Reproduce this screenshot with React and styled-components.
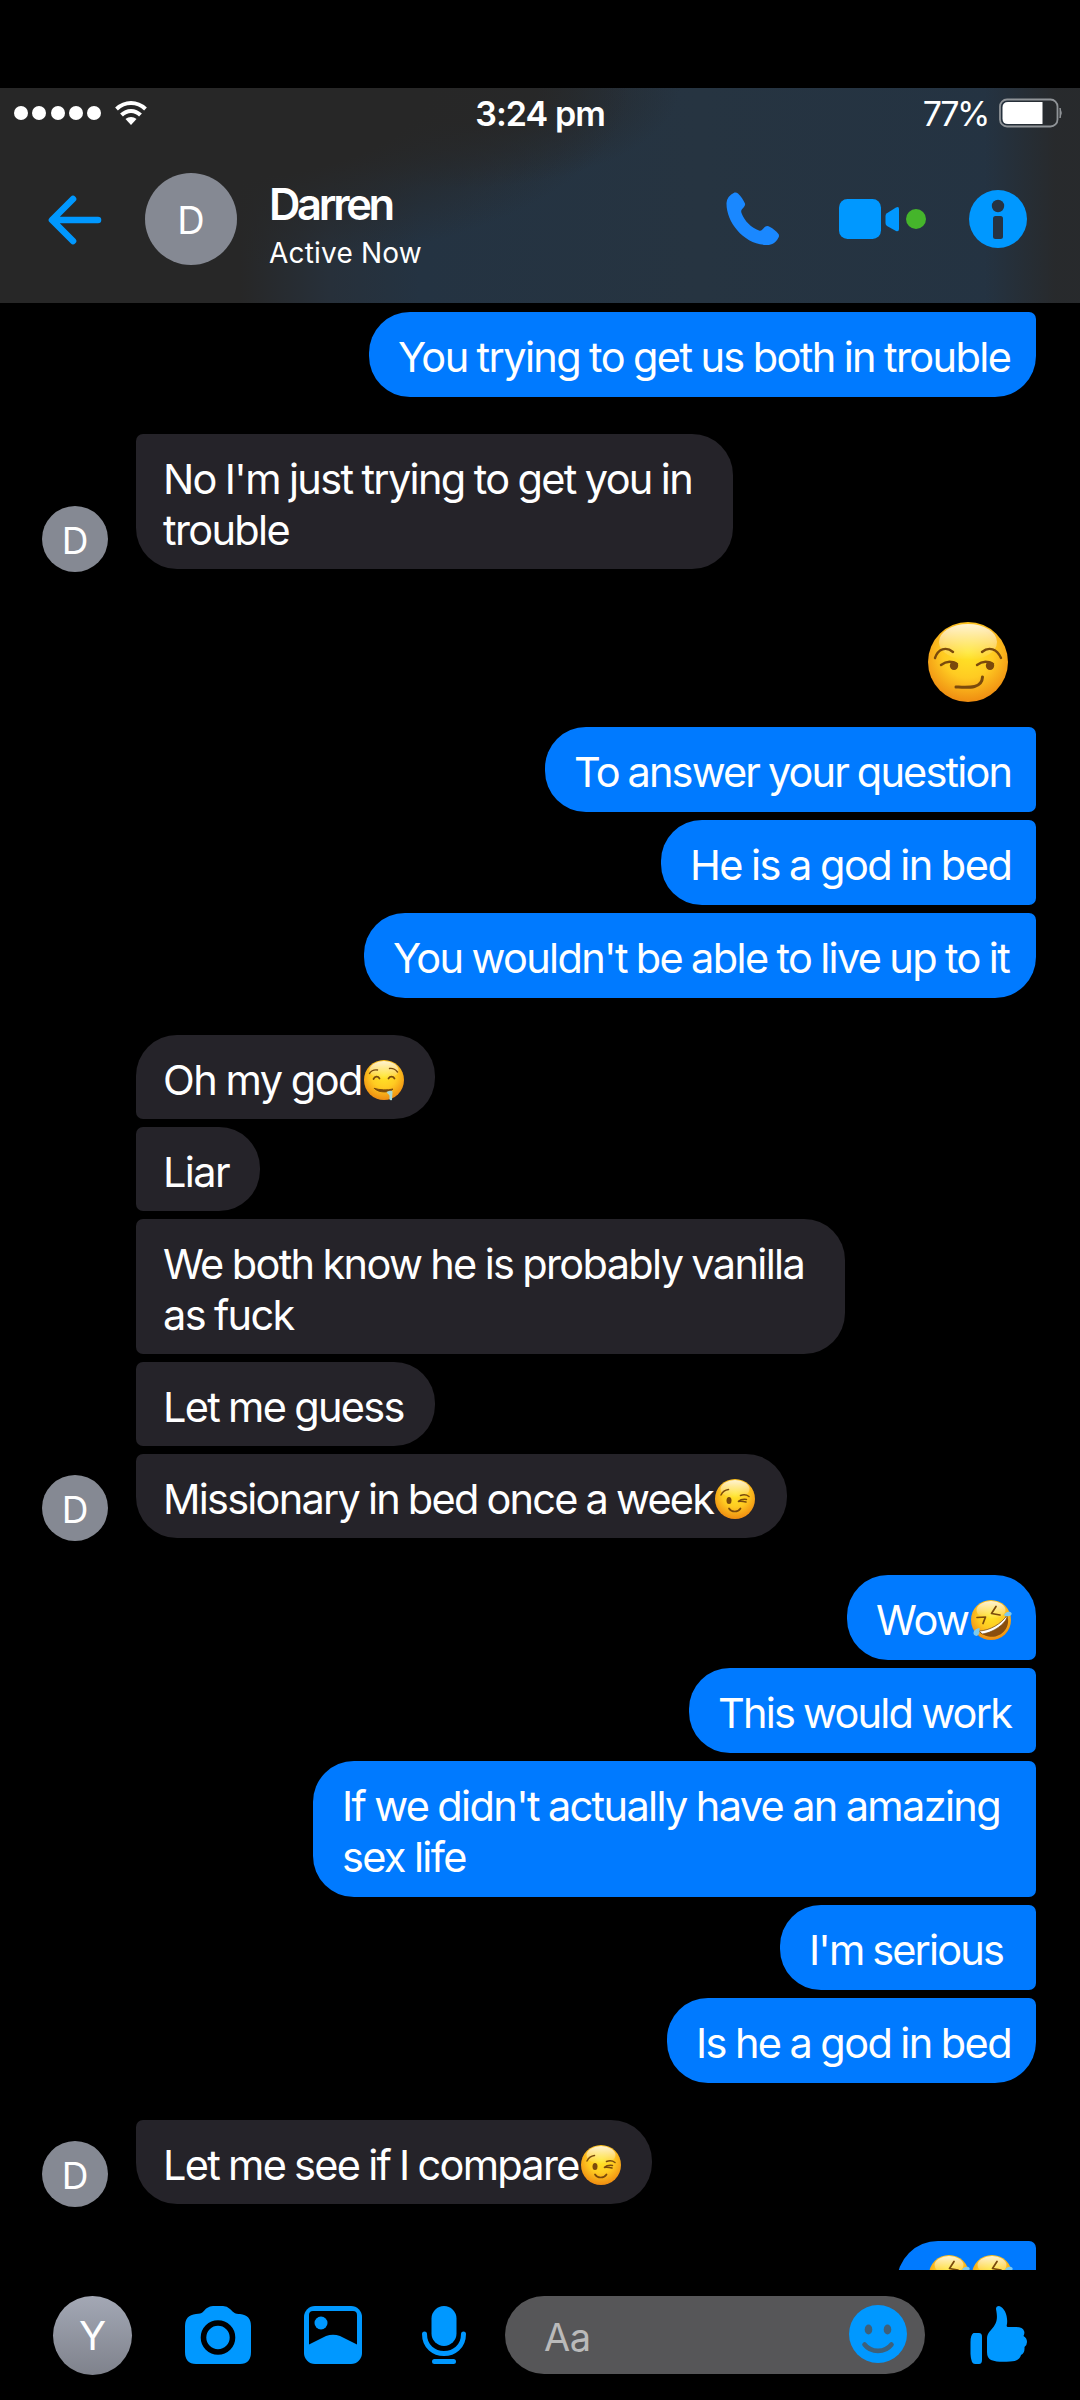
import React from "react";
import styled, { createGlobalStyle, css } from "styled-components";

const Global = createGlobalStyle`
  html, body { margin: 0; background: #000; }
  * { box-sizing: border-box; }
`;

const BLUE = "#0098ff";

const Screen = styled.div`
  width: 1080px;
  height: 2400px;
  padding-top: 88px;
  display: flex;
  flex-direction: column;
  overflow: hidden;
  background: #000;
  color: #fff;
  font-family: Inter, Roboto, "Liberation Sans", sans-serif;
`;

const Header = styled.header`
  flex: none;
  height: 215px;
  background:
    linear-gradient(90deg, rgba(39, 39, 39, 0) 985px, rgba(40, 41, 42, 0.9) 1055px),
    radial-gradient(ellipse 410px 180px at 220px 0, #272727 50%, rgba(39, 39, 39, 0) 100%),
    radial-gradient(ellipse 220px 100px at 460px 0, #272829 35%, rgba(39, 40, 41, 0) 100%),
    linear-gradient(90deg, #272727 240px, #27303a 330px, #243342 420px, #263441 700px, #243342 1000px);
`;

const StatusBar = styled.div`
  display: flex;
  align-items: center;
  height: 50px;
  padding: 0 17px 0 14px;
`;

const Signal = styled.div`
  display: flex;
  gap: 4.3px;
`;

const SignalDot = styled.span`
  width: 14px;
  height: 14px;
  border-radius: 50%;
  background: #fff;
`;

const Wifi = styled.svg`
  width: 32px;
  height: 24px;
  margin-left: 14px;
`;

const Clock = styled.time`
  width: 150px;
  margin: 1px 0 0 328px;
  font-size: 34px;
  font-weight: 580;
  letter-spacing: -0.9px;
  white-space: nowrap;
`;

const Percent = styled.span`
  margin: 1px 11px 0 auto;
  font-size: 34px;
  letter-spacing: -2.4px;
`;

const Battery = styled.svg`
  width: 64px;
  height: 30px;
`;

const TitleBar = styled.div`
  display: flex;
  align-items: center;
  height: 162px;
  padding: 0 53px 0 47px;
`;

const BackIcon = styled.svg`
  width: 56px;
  height: 52px;
`;

const Avatar = styled.div`
  flex: none;
  display: flex;
  align-items: center;
  justify-content: center;
  width: ${(p) => p.$size}px;
  height: ${(p) => p.$size}px;
  padding-top: 2px;
  border-radius: 50%;
  background: #858993;
  font-size: 38px;
  line-height: 1;
`;

const HeaderAvatar = styled(Avatar)`
  margin-left: 42px;
`;

const Person = styled.div`
  margin: 0 auto 0 32px;
  padding-top: 10px;
`;

const Name = styled.div`
  font-size: 43.5px;
  font-weight: 560;
  line-height: 52px;
  letter-spacing: -3.3px;
`;

const Presence = styled.div`
  font-size: 28px;
  line-height: 34px;
  letter-spacing: 0.2px;
  margin-top: 6px;
`;

const PhoneIcon = styled.svg`
  width: 54px;
  height: 54px;
`;

const VideoIcon = styled.svg`
  width: 60px;
  height: 40px;
  margin-left: 59px;
`;

const OnlineDot = styled.span`
  width: 20px;
  height: 20px;
  margin-left: 7px;
  border-radius: 50%;
  background: #45b52b;
`;

const InfoIcon = styled.svg`
  width: 58px;
  height: 58px;
  margin-left: 43px;
`;

const Thread = styled.main`
  flex: none;
  height: 1967px;
  padding: 9px 44px 0 42px;
  display: flex;
  flex-direction: column;
  gap: 37px;
  overflow: hidden;
`;

const Group = styled.section`
  flex: none;
  display: flex;
  align-items: flex-end;
  justify-content: ${(p) => (p.$mine ? "flex-end" : "flex-start")};
  padding-top: ${(p) => (p.$lift ? 16 : 0)}px;
`;

const Stack = styled.div`
  display: flex;
  flex-direction: column;
  gap: 8px;
  align-items: ${(p) => (p.$mine ? "flex-end" : "flex-start")};
`;

const SenderAvatar = styled(Avatar)`
  margin: 0 28px -3px 0;
  font-size: 37px;
`;

const radius = ({ $mine, $first, $last }) => {
  const head = $first ? 41 : 7;
  const tail = $last ? 41 : 7;
  return $mine
    ? css`border-radius: 41px ${head}px ${tail}px 41px;`
    : css`border-radius: ${head}px 41px 41px ${tail}px;`;
};

const Bubble = styled.div`
  width: ${(p) => p.$width}px;
  padding: ${(p) => (p.$mine ? "20px 0 14px 29px" : "20px 0 13px 27px")};
  ${radius}
  background: ${(p) => (p.$mine ? "#007aff" : "#252329")};
  font-size: 41.5px;
  line-height: 51px;
  letter-spacing: ${(p) => p.$track}px;
  word-spacing: -1px;
  white-space: pre;
`;

const EmojiBubble = styled(Bubble)`
  display: flex;
  gap: 1px;
  height: 85px;
  padding: 14px 0 0 30px;
`;

const BigEmoji = styled.div`
  height: 97px;
  padding: 0 28px 0 0;
  svg { display: block; width: 80px; height: 80px; margin: 0; }
`;

const EmojiSvg = styled.svg`
  flex: none;
  width: 40px;
  height: 40px;
  margin: 0 0 0 2px;
  vertical-align: -5px;
  overflow: visible;
`;

const Composer = styled.footer`
  display: flex;
  align-items: center;
  height: 130px;
  padding: 0 52px 0 53px;
`;

const SelfAvatar = styled(Avatar)`
  margin-right: 53px;
  background: linear-gradient(#a3a8b5, #7f828c);
  font-size: 40px;
`;

const ToolIcon = styled.svg`
  flex: none;
  width: ${(p) => p.$w}px;
  height: 58px;
  margin-right: ${(p) => p.$gap || 0}px;
`;

const Field = styled.div`
  display: flex;
  align-items: center;
  justify-content: space-between;
  width: 420px;
  height: 78px;
  margin-right: 45px;
  padding: 0 18px 2px 39px;
  border-radius: 39px;
  background: #565658;
`;

const Placeholder = styled.span`
  padding-top: 6px;
  font-size: 38px;
  color: #bababa;
  letter-spacing: -0.5px;
`;

const INK = "#7a4a0c";

const faces = {
  smirk: (
    <g fill="none" stroke={INK} strokeWidth="2.4" strokeLinecap="round">
      <path d="M7 36C10 27 18 24 25 30M54 30C61 24 69 27 73 36" />
      <path d="M13 43C18 39 24 39 29 42M49 43C54 39 60 39 65 42" />
      <circle cx="26" cy="43.800" r="4.200" fill={INK} stroke="none" />
      <circle cx="62" cy="43.800" r="4.200" fill={INK} stroke="none" />
      <path d="M28 65C40 65.500 54 67 54.500 55" strokeWidth="3" />
    </g>
  ),
  drool: (
    <g fill="none" stroke={INK} strokeWidth="2.800" strokeLinecap="round">
      <path d="M11 27C14 22 20 19 27 20M51 17C58 16 63 19 67 24" />
      <path d="M19 38C22 32 28 32 31 37M49 37C52 32 58 32 61 37" strokeWidth="3.400" />
      <path d="M21 57C31 60 48 61 58 58C54 65 30 67 21 57Z" fill={INK} strokeWidth="2" />
      <path d="M45 64C50 62 57 60 57 64L56 80C52 82 50 79 51 75C52 68 48 69 45 64Z" fill="#a9d8d2" stroke="none" />
    </g>
  ),
  wink: (
    <g fill="none" stroke={INK} strokeWidth="3" strokeLinecap="round">
      <path d="M12 32C15 26 20 22 27 21M51 33C57 31 64 32 68 35" />
      <ellipse cx="28" cy="43" rx="5" ry="7" fill={INK} stroke="none" />
      <path d="M63 41C56 40 50 42 46 45C52 44 58 45 62 46" />
      <path d="M28 59C33 67 46 67 51 59" strokeWidth="3.400" />
    </g>
  ),
  rofl: (
    <g fill="none" stroke={INK} strokeWidth="3.400" strokeLinecap="round" strokeLinejoin="round">
      <path d="M12 35L29 34L24 47M50 13L41 27L58 30" />
      <path d="M16 63C36 62 60 50 72 30C82 56 58 78 35 73C27 71 20 68 16 63Z" fill="#8a4e0d" stroke="none" />
      <path d="M17 62C38 61 60 48 72 31C74 42 50 64 23 68Z" fill="#fff" stroke={INK} strokeWidth="1.500" />
      <path d="M17 56C5 58 2 67 8 71C14 74 18 68 17 56Z M66 31C68 23 78 22 81 26C83 31 75 35 66 31Z" fill="#7cc9ee" stroke="none" />
    </g>
  ),
};

function Emoji({ kind }) {
  return (
    <EmojiSvg viewBox="0 0 80 80" aria-hidden="true">
      <defs>
        <radialGradient id={`glow-${kind}`} cx="50%" cy="38%" r="64%">
          <stop offset="0" stopColor="#ffe627" />
          <stop offset="0.500" stopColor="#ffcb22" />
          <stop offset="1" stopColor="#ee8810" />
        </radialGradient>
        <linearGradient id={`shine-${kind}`} x1="0" y1="0" x2="0" y2="1">
          <stop offset="0" stopColor="#fff" stopOpacity="0.800" />
          <stop offset="1" stopColor="#fff" stopOpacity="0" />
        </linearGradient>
      </defs>
      <circle cx="40" cy="40" r="40" fill={`url(#glow-${kind})`} />
      <ellipse cx="40" cy="20" rx="29" ry="18" fill={`url(#shine-${kind})`} />
      {faces[kind]}
    </EmojiSvg>
  );
}

const conversation = [
  { mine: true, continued: true, items: [{ text: "You trying to get us both in trouble", width: 667, track: -1.62 }] },
  { continued: true, items: [{ text: "No I'm just trying to get you in\ntrouble", width: 597, track: -1.65 }] },
  {
    mine: true,
    lift: true,
    items: [
      { big: "smirk" },
      { text: "To answer your question", width: 491, track: -1.86 },
      { text: "He is a god in bed", width: 375, track: -1.54 },
      { text: "You wouldn't be able to live up to it", width: 672, track: -1.66 },
    ],
  },
  {
    items: [
      { text: "Oh my god", emoji: "drool", width: 299, track: -1.5 },
      { text: "Liar", width: 124, track: -1.6 },
      { text: "We both know he is probably vanilla\nas fuck", width: 709, track: -1.66 },
      { text: "Let me guess", width: 299, track: -1.7 },
      { text: "Missionary in bed once a week", emoji: "wink", width: 651, track: -1.77 },
    ],
  },
  {
    mine: true,
    items: [
      { text: "Wow", emoji: "rofl", width: 189, track: -1.4 },
      { text: "This would work", width: 347, track: -1.78 },
      { text: "If we didn't actually have an amazing\nsex life", width: 723, track: -1.65 },
      { text: "I'm serious ", width: 256, track: -1.85 },
      { text: "Is he a god in bed", width: 369, track: -1.6 },
    ],
  },
  { continued: true, items: [{ text: "Let me see if I compare", emoji: "wink", width: 516, track: -1.72 }] },
  { mine: true, continued: true, items: [{ emojis: ["rofl", "rofl"], width: 139 }] },
];

function Message({ item, mine, first, last }) {
  if (item.big) return <BigEmoji><Emoji kind={item.big} /></BigEmoji>;
  const shape = { $mine: mine, $first: first, $last: last, $width: item.width };
  if (item.emojis) {
    return (
      <EmojiBubble {...shape}>
        {item.emojis.map((kind, i) => <Emoji key={i} kind={kind} />)}
      </EmojiBubble>
    );
  }
  return (
    <Bubble {...shape} $track={item.track}>
      {item.text}
      {item.emoji && <Emoji kind={item.emoji} />}
    </Bubble>
  );
}

export default function App() {
  return (
    <Screen>
      <Global />
      <Header>
        <StatusBar>
          <Signal>{[0, 1, 2, 3, 4].map((n) => <SignalDot key={n} />)}</Signal>
          <Wifi viewBox="0 0 32 24" fill="none" stroke="#fff" strokeWidth="4">
            <path d="M1.500 8C10 0 22 0 30.500 8M6.500 14C12 8.500 20 8.500 25.500 14" />
            <path d="M10.500 18C13.500 15.200 18.500 15.200 21.500 18L16 24Z" fill="#fff" stroke="none" />
          </Wifi>
          <Clock>3:24 pm</Clock>
          <Percent>77%</Percent>
          <Battery viewBox="0 0 64 30">
            <rect x="1" y="1.500" width="57.500" height="27" rx="7" fill="none" stroke="#909498" strokeWidth="1.800" />
            <path d="M9 4H43.500V26H9Q3.500 26 3.500 20.500V9.500Q3.500 4 9 4Z" fill="#fff" />
            <path d="M61 10Q63.500 15 61 20Z" fill="#909498" stroke="#909498" />
          </Battery>
        </StatusBar>
        <TitleBar>
          <BackIcon viewBox="0 0 56 52" fill="none" stroke={BLUE} strokeWidth="6.600" strokeLinecap="round" strokeLinejoin="round">
            <path d="M26 6L5 27L26 48M6 27H51" />
          </BackIcon>
          <HeaderAvatar $size={92}>D</HeaderAvatar>
          <Person>
            <Name>Darren</Name>
            <Presence>Active Now</Presence>
          </Person>
          <PhoneIcon viewBox="0 0 54 54" fill="#1a88ff">
            <path d="M8.500 0.500Q10.500 0 12 1.500C15 4.500 17.500 8 19 11.500Q19.500 13 18 15C16 17.500 14.500 18 15.500 21C18.500 29 25.500 36 33 38.500C36 39.500 37 36 39.500 34.500Q41.500 33.500 44 35C47 36.500 50 39 52.500 42Q53.500 43.500 52.500 45.500C49.500 51 46.500 53 41 53C18 53 0 30 0.500 11Q1 4 8.500 0.500Z" />
          </PhoneIcon>
          <VideoIcon viewBox="0 0 60 40" fill={BLUE}>
            <rect width="42" height="40" rx="8.500" />
            <path d="M47.500 14.500Q46.500 15.500 46.500 17V24Q46.500 26 48 27L57 32Q60 33 60 30V10Q60 7 57 8.500Z" />
          </VideoIcon>
          <OnlineDot />
          <InfoIcon viewBox="0 0 58 58">
            <circle cx="29" cy="29" r="29" fill={BLUE} />
            <circle cx="29" cy="16" r="6.200" fill="#263342" />
            <rect x="24" y="26" width="10" height="23" rx="2.500" fill="#263342" />
          </InfoIcon>
        </TitleBar>
      </Header>

      <Thread>
        {conversation.map((group, g) => (
          <Group key={g} $mine={group.mine} $lift={group.lift}>
            {!group.mine && <SenderAvatar $size={66}>D</SenderAvatar>}
            <Stack $mine={group.mine}>
              {group.items.map((item, i) => (
                <Message
                  key={i}
                  item={item}
                  mine={group.mine}
                  first={i === 0 && !group.continued}
                  last={i === group.items.length - 1}
                />
              ))}
            </Stack>
          </Group>
        ))}
      </Thread>

      <Composer>
        <SelfAvatar $size={79}>Y</SelfAvatar>
        <ToolIcon $w={66} $gap={53} viewBox="0 0 66 58">
          <path d="M11 8C18 8 18 5 22 2Q25 0 28 0H38Q42 0 45 3C49 7 50 8 55 8Q66 9 66 20V46Q66 58 55 58H11Q0 58 0 46V20Q0 9 11 8Z" fill={BLUE} />
          <circle cx="33" cy="31.500" r="14.500" fill={BLUE} stroke="#000" strokeWidth="5.600" />
        </ToolIcon>
        <ToolIcon $w={58} $gap={60} viewBox="0 0 58 58">
          <rect width="58" height="58" rx="11" fill={BLUE} />
          <path d="M9 5H49Q53 5 53 9V38.500L36 30Q29 27.500 22 30L5 38.500V9Q5 5 9 5Z" fill="#000" />
          <circle cx="17" cy="17" r="6.500" fill={BLUE} />
        </ToolIcon>
        <ToolIcon $w={44} $gap={39} viewBox="0 0 44 58" fill="none" stroke={BLUE} strokeWidth="5" strokeLinecap="round">
          <rect x="9.500" y="0" width="25" height="40" rx="12.500" fill={BLUE} stroke="none" />
          <path d="M2.500 28C2.500 54 41.500 54 41.500 28M12.500 55.500H31.500" />
        </ToolIcon>
        <Field>
          <Placeholder>Aa</Placeholder>
          <ToolIcon $w={58} viewBox="0 0 58 58">
            <circle cx="29" cy="29" r="29" fill={BLUE} />
            <ellipse cx="19.500" cy="24.500" rx="3.800" ry="5" fill="#3f6079" />
            <ellipse cx="38.500" cy="24.500" rx="3.800" ry="5" fill="#3f6079" />
            <path d="M15.500 39.500C22 48 36 48 42.500 39.500" fill="none" stroke="#3f6079" strokeWidth="4.600" strokeLinecap="round" />
          </ToolIcon>
        </Field>
        <ToolIcon $w={57} viewBox="0 0 57 58" fill={BLUE}>
          <path d="M3.500 27H9Q12 27 12 30.500V54Q12 58 9 58H5Q1 58 0.500 48V36Q0.500 29 3.500 27Z" />
          <path d="M26 3Q26 0 29 0C35 2 38 10 37 18Q36 21 38 21H46Q53 21 54 25Q55 27 53.500 30Q57 32 57 36Q57 39 54.500 41Q55 47 51 49C50 53 47 55 40 55.500C33 56 26 56 21 54Q17 52 17 46V32Q17 28 21 24C27 17 28 13 26 3Z" />
        </ToolIcon>
      </Composer>
    </Screen>
  );
}
